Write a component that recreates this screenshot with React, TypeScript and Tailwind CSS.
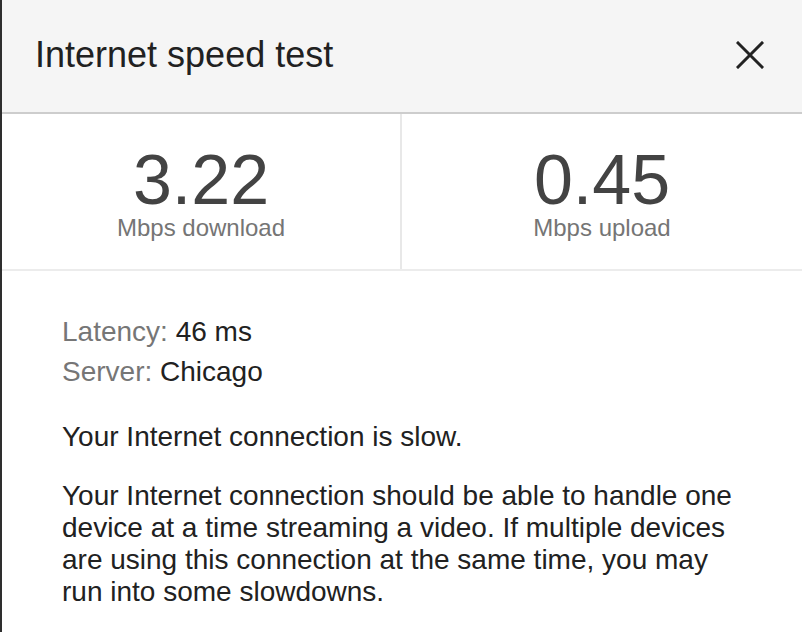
import React from 'react';

const stats = [
  { value: '3.22', label: 'Mbps download' },
  { value: '0.45', label: 'Mbps upload' },
];

function CloseIcon() {
  return (
    <svg width="28" height="28" viewBox="0 0 28 28" className="text-[#222222]">
      <path d="M2 2 L26 26 M26 2 L2 26" stroke="currentColor" strokeWidth="3" strokeLinecap="square" fill="none" />
    </svg>
  );
}

export default function App() {
  return (
    <div className="flex h-[632px] w-full overflow-hidden bg-white font-['Liberation_Sans',Arial,sans-serif]">
      <div className="w-[2px] shrink-0 bg-[#2e2e2e]" />
      <div className="flex flex-1 flex-col">
        {/* header */}
        <div className="flex h-[114px] shrink-0 items-center justify-between border-b-2 border-[#cdcdcd] bg-[#f5f5f5] pb-[2px] pl-[33px] pr-[38px]">
          <h1 className="text-[36px] leading-[42px] text-[#212121]">Internet speed test</h1>
          <button className="flex h-[28px] w-[28px] items-center justify-center">
            <CloseIcon />
          </button>
        </div>

        {/* results */}
        <div className="grid h-[157px] shrink-0 grid-cols-2 border-b-2 border-[#ececec]">
          {stats.map((s, i) => (
            <div
              key={i}
              className={
                'flex flex-col items-center pt-[31px] ' + (i === 0 ? 'border-r-2 border-[#e8e8e8]' : '')
              }
            >
              <div className="text-[70px] leading-[70px] text-[#434343]">{s.value}</div>
              <div className="mt-px text-[24px] leading-[24px] text-[#757575]">{s.label}</div>
            </div>
          ))}
        </div>

        {/* details */}
        <div className="pl-[60px] pr-[60px] pt-[41px] text-[28px] text-[#212121]">
          <div className="leading-[40px]">
            <span className="text-[#767676]">Latency:</span> 46 ms
          </div>
          <div className="leading-[40px]">
            <span className="text-[#767676]">Server:</span> Chicago
          </div>
          <p className="mt-[29px] leading-[32px]">Your Internet connection is slow.</p>
          <p className="mt-[27px] leading-[32px]">
            Your Internet connection should be able to handle one device at a time streaming a video. If
            multiple devices are using this connection at the same time, you may run into some slowdowns.
          </p>
        </div>
      </div>
    </div>
  );
}
